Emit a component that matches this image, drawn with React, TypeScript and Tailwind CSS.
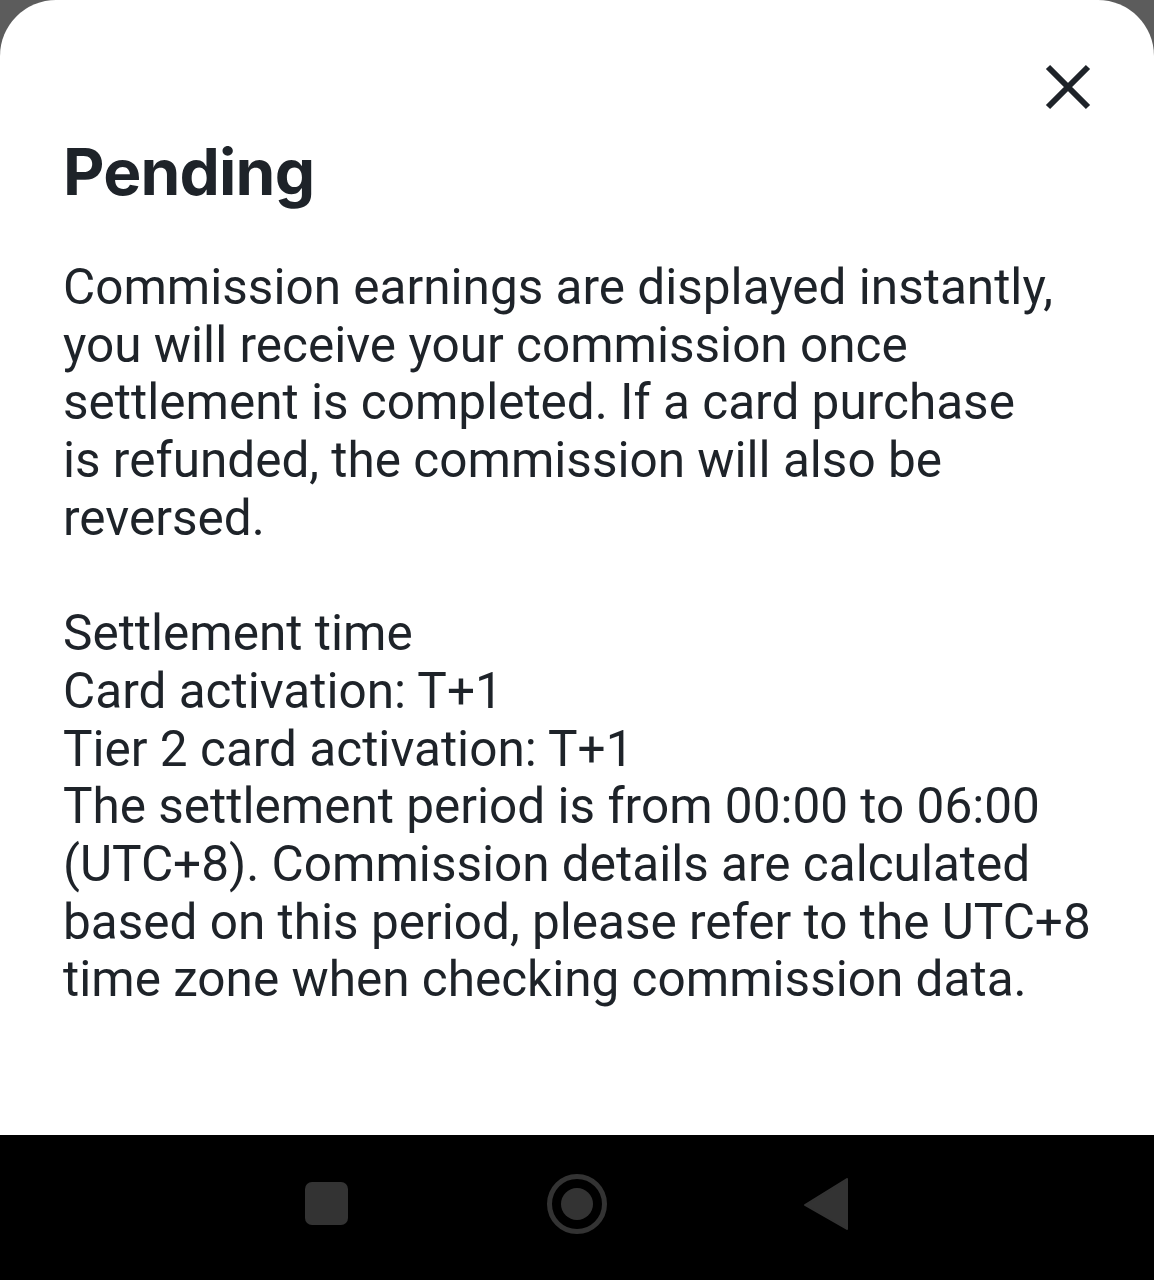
import React from "react";

const lines1 = [
  "Commission earnings are displayed instantly,",
  "you will receive your commission once",
  "settlement is completed. If a card purchase",
  "is refunded, the commission will also be",
  "reversed.",
];
const lines2 = [
  "Settlement time",
  "Card activation: T+1",
  "Tier 2 card activation: T+1",
  "The settlement period is from 00:00 to 06:00",
  "(UTC+8). Commission details are calculated",
  "based on this period, please refer to the UTC+8",
  "time zone when checking commission data.",
];

export default function App() {
  return (
    <div className="w-[1154px] h-[1280px] bg-[#5c5c5c] flex flex-col overflow-hidden">
      <div className="flex-1 bg-white rounded-t-[56px] flex flex-col px-[63px] relative">
        <div className="flex justify-end pt-[64px]">
          <svg width="46" height="46" viewBox="0 0 46 46" className="text-[#1e2329]">
            <path d="M3 3 L43 43 M43 3 L3 43" stroke="currentColor" strokeWidth="6" strokeLinecap="butt" />
          </svg>
        </div>
        <h1
          className="mt-[24px] text-[64px] font-bold leading-[76px] text-[#1e2329] tracking-[-0.8px]"
          style={{ fontFamily: "Inter, 'Noto Sans', sans-serif" }}
        >
          Pending
        </h1>
        <div
          className="mt-[49px] text-[49.5px] leading-[57.7px] text-[#1e2329] whitespace-nowrap"
          style={{ fontFamily: "Roboto, 'Noto Sans', sans-serif" }}
        >
          {lines1.map((l) => (
            <div key={l}>{l}</div>
          ))}
          <div className="h-[57.7px]" />
          {lines2.map((l) => (
            <div key={l}>{l}</div>
          ))}
        </div>
      </div>
      <div className="h-[145px] bg-black relative">
        <div className="absolute left-[305px] top-[47px] w-[43px] h-[43px] rounded-[7px] bg-[#333333]" />
        <div className="absolute left-[547px] top-[39px] w-[60px] h-[60px] rounded-full border-[5px] border-[#333333] flex items-center justify-center">
          <div className="w-[32px] h-[32px] rounded-full bg-[#333333]" />
        </div>
        <svg className="absolute left-[804px] top-[43px]" width="44" height="52" viewBox="0 0 44 52">
          <path d="M43 1 L43 51 L1 27 Z" fill="#333333" strokeLinejoin="round" stroke="#333333" strokeWidth="2" />
        </svg>
      </div>
    </div>
  );
}
